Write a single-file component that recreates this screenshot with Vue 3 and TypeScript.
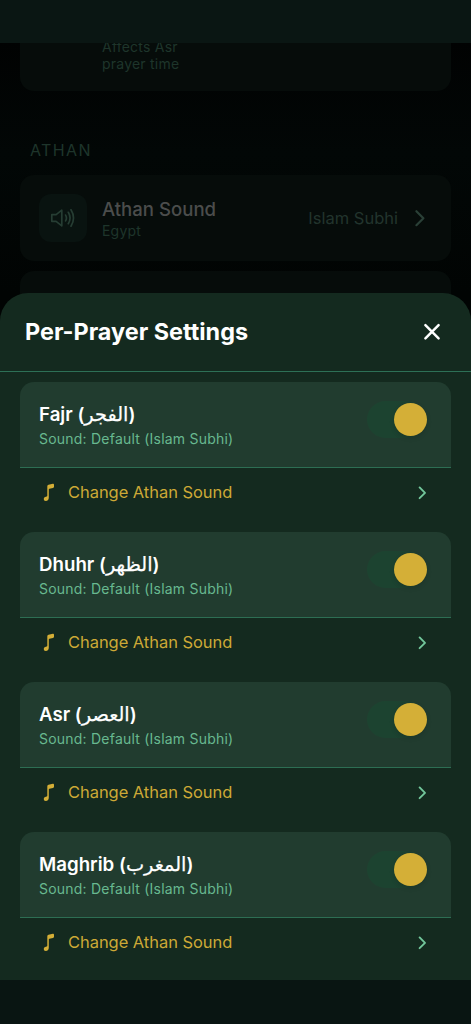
<script setup lang="ts">
interface Prayer {
  name: string
  arabic: string
}

const prayers: Prayer[] = [
  { name: 'Fajr', arabic: 'الفجر' },
  { name: 'Dhuhr', arabic: 'الظهر' },
  { name: 'Asr', arabic: 'العصر' },
  { name: 'Maghrib', arabic: 'المغرب' },
]
</script>

<template>
  <div class="screen">
    <div class="status-bar"></div>
    <main class="page">
      <section class="tile tile-top">
        <p class="hint">Affects Asr<br />prayer time</p>
      </section>
      <h3 class="group-title">ATHAN</h3>
      <section class="tile tile-sound">
        <div class="tile-icon">
          <svg width="26" height="22" viewBox="0 0 26 22" fill="none" stroke="#263d33" stroke-width="1.7" stroke-linecap="round" stroke-linejoin="round">
            <path d="M1.8 7.6h4.3l5.7-4.4v15.6l-5.7-4.5H1.8z" />
            <path d="M15.6 8.1q1.7 2.9 0 5.8M18.3 5.3q3.5 5.7 0 11.4M21 2.8q5 8.2 0 16.4" />
          </svg>
        </div>
        <div class="tile-text">
          <div class="tile-title">Athan Sound</div>
          <div class="tile-sub">Egypt</div>
        </div>
        <span class="tile-value">Islam Subhi</span>
        <svg class="tile-chevron" width="12" height="18" viewBox="0 0 12 18" fill="none" stroke="#2a4037" stroke-width="2.2" stroke-linecap="round" stroke-linejoin="round">
          <path d="M2.4 2.2L9.4 9.2L2.4 16.2" />
        </svg>
      </section>
      <section class="tile tile-next"></section>
    </main>

    <div class="sheet">
      <header class="sheet-header">
        <h2>Per-Prayer Settings</h2>
        <svg width="18" height="18" viewBox="0 0 18 18" fill="none" stroke="#fff" stroke-width="2.5" stroke-linecap="round">
          <path d="M2.4 2.2l13.2 13.2M15.6 2.2L2.4 15.4" />
        </svg>
      </header>
      <div class="list">
        <article v-for="p in prayers" :key="p.name" class="prayer">
          <div class="prayer-card">
            <div>
              <div class="prayer-name">
                <span class="latin">{{ p.name }} (</span><span class="arabic" lang="ar">{{ p.arabic }}</span><span>)</span>
              </div>
              <div class="prayer-sound">Sound: Default (Islam Subhi)</div>
            </div>
            <div class="toggle"><i class="knob"></i></div>
          </div>
          <div class="change">
            <svg class="note" width="12" height="20" viewBox="0 0 12 20" fill="#d4af37">
              <path d="M4.3 3.3Q4.3 2 5.5 1.7L9.9.8Q11 .6 11 1.7V3.8Q11 4.8 10 5L6.4 5.8Q5.8 5.9 5.8 6.6V14.4Q5.8 17.8 2.7 17.9Q.7 17.9.7 16Q.7 14.2 2.8 13.8L3.7 13.6Q4.3 13.4 4.3 12.8z" />
            </svg>
            <span>Change Athan Sound</span>
            <svg class="chevron" width="10" height="14" viewBox="0 0 10 14" fill="none" stroke="#72c69b" stroke-width="1.9" stroke-linecap="round" stroke-linejoin="round">
              <path d="M2.6 1.4L8 6.8l-5.4 5.4" />
            </svg>
          </div>
        </article>
      </div>
    </div>
    <div class="bottom-bar"></div>
  </div>
</template>

<style>
body {
  margin: 0;
  background: #020504;
}
</style>

<style scoped>
.screen {
  position: relative;
  width: 471px;
  height: 1024px;
  overflow: hidden;
  display: flex;
  flex-direction: column;
  background: #020504;
  font-family: Inter, "Liberation Sans", sans-serif;
}
.screen * {
  box-sizing: border-box;
}
.status-bar {
  flex: none;
  height: 43px;
  background: #0a1613;
}
.page {
  flex: 1;
  min-height: 0;
  overflow: hidden;
  padding: 0 20px;
  background: linear-gradient(#010202, #020706 110px, #010403 250px);
}
.tile {
  background: #060c0a;
  border-radius: 14px;
}
.tile-top {
  height: 48px;
  border-radius: 0 0 14px 14px;
  padding-left: 82px;
  overflow: hidden;
}
.hint {
  margin: -5.5px 0 0;
  font-size: 14px;
  line-height: 17.5px;
  letter-spacing: 0.22px;
  color: #1e352b;
}
.group-title {
  margin: 49px 0 0 10px;
  height: 20px;
  font-size: 16px;
  line-height: 20px;
  font-weight: 400;
  letter-spacing: 1.4px;
  color: #1e352b;
}
.tile-sound {
  margin-top: 15px;
  height: 86px;
  padding: 0 25px 0 19px;
  display: flex;
  align-items: center;
}
.tile-icon {
  width: 48px;
  height: 48px;
  border-radius: 12px;
  background: #091310;
  display: flex;
  align-items: center;
  justify-content: center;
}
.tile-text {
  flex: 1;
  margin: 2px 0 0 15px;
}
.tile-title {
  font-size: 18.6px;
  line-height: 24px;
  font-weight: 500;
  color: #4b4d4c;
}
.tile-sub {
  font-size: 14px;
  line-height: 20px;
  letter-spacing: 0.2px;
  color: #1e352b;
}
.tile-value {
  font-size: 16.5px;
  color: #22342d;
  margin-right: 16px;
}
.tile-next {
  margin-top: 10px;
  height: 86px;
}
.sheet {
  position: absolute;
  left: 0;
  right: 0;
  top: 293px;
  height: 687px;
  border-radius: 28px 28px 0 0;
  background: #142a1f;
  overflow: hidden;
}
.sheet-header {
  height: 79px;
  padding: 0 30px 0 25px;
  display: flex;
  align-items: center;
  justify-content: space-between;
  border-bottom: 1px solid #2d7056;
}
h2 {
  margin: 0;
  font-size: 23.4px;
  line-height: 30px;
  font-weight: 700;
  color: #fff;
}
.list {
  padding: 9.5px 20px 0;
}
.prayer {
  height: 150.1px;
}
.prayer-card {
  height: 86px;
  padding: 0 24px 0 19px;
  display: flex;
  align-items: center;
  justify-content: space-between;
  border-radius: 14px 14px 0 0;
  border-bottom: 1.5px solid #2d6e53;
  background: #213c2f;
}
.prayer-name {
  display: flex;
  height: 26px;
  margin-top: 3px;
  font-size: 18.7px;
  line-height: 26px;
  font-weight: 600;
  color: #fff;
}
.latin {
  white-space: pre;
}
.arabic {
  font-family: "DejaVu Sans", sans-serif;
  font-weight: 400;
  font-size: 19.3px;
  -webkit-text-stroke: 0.25px #fff;
}
.prayer-sound {
  font-size: 14px;
  line-height: 20px;
  letter-spacing: 0.22px;
  margin-top: 1px;
  color: #68b990;
}
.toggle {
  width: 60px;
  height: 37px;
  border-radius: 19px;
  margin-top: -9px;
  display: flex;
  align-items: center;
  justify-content: flex-end;
  background: linear-gradient(90deg, #1c4330 45%, #213c2f);
}
.knob {
  width: 33px;
  height: 33px;
  border-radius: 50%;
  background: #d4af37;
  box-shadow: 0 2px 5px #0002;
}
.change {
  height: 50px;
  padding: 0 24px 0 23px;
  display: flex;
  align-items: center;
  color: #cda936;
  font-size: 16.5px;
  letter-spacing: -0.05px;
}
.change span {
  flex: 1;
  margin: -1px 0 0 13px;
}
.bottom-bar {
  flex: none;
  height: 44px;
  background: #091512;
}
</style>
